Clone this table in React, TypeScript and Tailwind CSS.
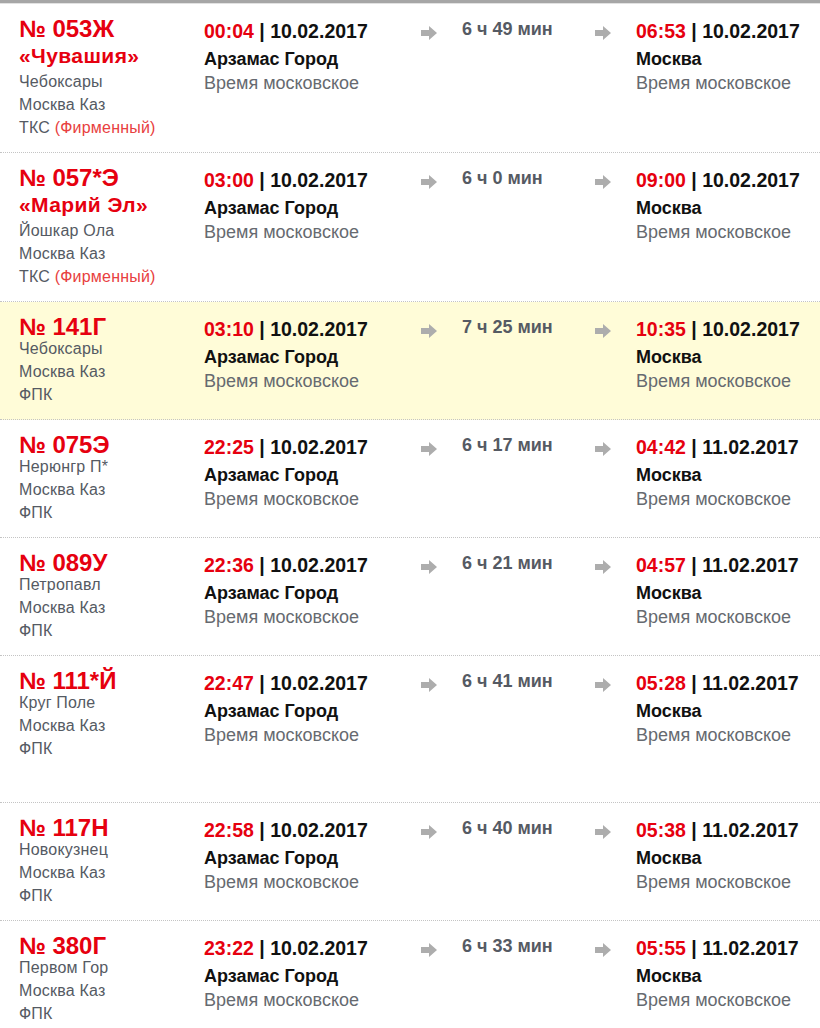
import React from 'react';

type Train = {
  num: string;
  name?: string;
  from: string;
  to: string;
  carrier: string;
  branded?: boolean;
  dep: string;
  depDate: string;
  dur: string;
  arr: string;
  arrDate: string;
  highlight?: boolean;
  tall?: boolean;
};

const trains: Train[] = [
  { num: '№ 053Ж', name: '«Чувашия»', from: 'Чебоксары', to: 'Москва Каз', carrier: 'ТКС', branded: true, dep: '00:04', depDate: '10.02.2017', dur: '6 ч 49 мин', arr: '06:53', arrDate: '10.02.2017' },
  { num: '№ 057*Э', name: '«Марий Эл»', from: 'Йошкар Ола', to: 'Москва Каз', carrier: 'ТКС', branded: true, dep: '03:00', depDate: '10.02.2017', dur: '6 ч 0 мин', arr: '09:00', arrDate: '10.02.2017' },
  { num: '№ 141Г', from: 'Чебоксары', to: 'Москва Каз', carrier: 'ФПК', dep: '03:10', depDate: '10.02.2017', dur: '7 ч 25 мин', arr: '10:35', arrDate: '10.02.2017', highlight: true },
  { num: '№ 075Э', from: 'Нерюнгр П*', to: 'Москва Каз', carrier: 'ФПК', dep: '22:25', depDate: '10.02.2017', dur: '6 ч 17 мин', arr: '04:42', arrDate: '11.02.2017' },
  { num: '№ 089У', from: 'Петропавл', to: 'Москва Каз', carrier: 'ФПК', dep: '22:36', depDate: '10.02.2017', dur: '6 ч 21 мин', arr: '04:57', arrDate: '11.02.2017' },
  { num: '№ 111*Й', from: 'Круг Поле', to: 'Москва Каз', carrier: 'ФПК', dep: '22:47', depDate: '10.02.2017', dur: '6 ч 41 мин', arr: '05:28', arrDate: '11.02.2017', tall: true },
  { num: '№ 117Н', from: 'Новокузнец', to: 'Москва Каз', carrier: 'ФПК', dep: '22:58', depDate: '10.02.2017', dur: '6 ч 40 мин', arr: '05:38', arrDate: '11.02.2017' },
  { num: '№ 380Г', from: 'Первом Гор', to: 'Москва Каз', carrier: 'ФПК', dep: '23:22', depDate: '10.02.2017', dur: '6 ч 33 мин', arr: '05:55', arrDate: '11.02.2017' },
];

const Arrow = () => (
  <svg width="16" height="14" viewBox="0 0 16 14" className="mt-[7px]">
    <path d="M0 4h8V0l8 7-8 7v-4H0z" fill="#adadad" />
  </svg>
);

const Stop = ({ time, date, station }: { time: string; date: string; station: string }) => (
  <div>
    <div className="text-[19.5px] font-bold leading-[24px] text-[#111]">
      <span className="text-[#e6000f]">{time}</span> | {date}
    </div>
    <div className="mt-[3px] text-[18px] font-bold leading-[26px] text-[#111]">{station}</div>
    <div className="text-[18px] leading-[22px] text-[#666a70]">Время московское</div>
  </div>
);

const Row = ({ t }: { t: Train }) => (
  <div
    className={`flex border-b border-dotted border-[#c4c4c4] pl-[19px] pt-[15px] ${t.tall ? 'pb-[42px]' : 'pb-[13px]'} ${
      t.highlight ? 'bg-[#fffcd8]' : 'bg-white'
    }`}
  >
    <div className="w-[185px] shrink-0">
      <div className="text-[24px] font-bold leading-[20px] text-[#e6000f]">{t.num}</div>
      {t.name && (
        <div className="mt-[3px] text-[21px] font-bold leading-[28px] tracking-[0.4px] text-[#e6000f]">{t.name}</div>
      )}
      <div className="text-[16px] leading-[23px] tracking-[0.2px] text-[#555a63]">
        <div>{t.from}</div>
        <div>{t.to}</div>
        <div>
          {t.carrier}
          {t.branded && <span className="text-[#e84040]"> (Фирменный)</span>}
        </div>
      </div>
    </div>
    <div className="w-[217px] shrink-0">
      <Stop time={t.dep} date={t.depDate} station="Арзамас Город" />
    </div>
    <div className="w-[41px] shrink-0">
      <Arrow />
    </div>
    <div className="w-[133px] shrink-0 text-[18px] font-bold leading-[20px] text-[#555a63]">{t.dur}</div>
    <div className="w-[41px] shrink-0">
      <Arrow />
    </div>
    <div className="flex-1">
      <Stop time={t.arr} date={t.arrDate} station="Москва" />
    </div>
  </div>
);

export default function App() {
  return (
    <div className="h-[1028px] w-[820px] overflow-hidden bg-white font-['Liberation_Sans',Arial,sans-serif]">
      <div className="h-[3px] bg-[#a6a6a6]" />
      <div className="h-[1px] bg-[#e2e2e2]" />
      {trains.map((t) => (
        <Row key={t.num} t={t} />
      ))}
    </div>
  );
}
